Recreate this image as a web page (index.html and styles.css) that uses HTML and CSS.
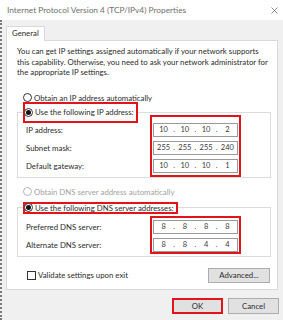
FILE: index.html
```html
<!DOCTYPE html>
<html lang="en">
<head>
  <meta charset="UTF-8">
  <meta name="viewport" content="width=device-width, initial-scale=1.0">
  <title>Internet Protocol Version 4 (TCP/IPv4) Properties</title>
  <link rel="stylesheet" href="styles.css">
</head>
<body>
  <div class="window">
    <div class="titlebar">
      <span class="title">Internet Protocol Version 4 (TCP/IPv4) Properties</span>
      <svg class="close" width="7" height="7" viewBox="0 0 7 7">
        <path d="M0.5 0.5L6.5 6.5M6.5 0.5L0.5 6.5" stroke="#6b6b6b" stroke-width="0.8" fill="none"/>
      </svg>
    </div>
    <div class="content">
      <div class="tabs">
        <div class="tab">General</div>
      </div>
      <div class="panel">
        <p class="intro">You can get IP settings assigned automatically if your network supports this capability. Otherwise, you need to ask your network administrator for the appropriate IP settings.</p>

        <div class="option option-ip">
          <span class="radio"></span>
          <span>Obtain an IP address automatically</span>
        </div>
        <fieldset class="group group-ip">
          <legend class="legend mark legend-ip">
            <span class="radio checked"></span>
            <span>Use the following IP address:</span>
          </legend>
          <div class="group-body">
            <div class="labels">
              <div class="row">IP address:</div>
              <div class="row">Subnet mask:</div>
              <div class="row">Default gateway:</div>
            </div>
            <div class="fields mark fields-ip">
              <div class="ipbox"><span>10</span><i>.</i><span>10</span><i>.</i><span>10</span><i>.</i><span>2</span></div>
              <div class="ipbox"><span>255</span><i>.</i><span>255</span><i>.</i><span>255</span><i>.</i><span>240</span></div>
              <div class="ipbox"><span>10</span><i>.</i><span>10</span><i>.</i><span>10</span><i>.</i><span>1</span></div>
            </div>
          </div>
        </fieldset>

        <div class="option option-dns disabled">
          <span class="radio"></span>
          <span>Obtain DNS server address automatically</span>
        </div>
        <fieldset class="group group-dns">
          <legend class="legend mark legend-dns">
            <span class="radio checked"></span>
            <span>Use the following DNS server addresses:</span>
          </legend>
          <div class="group-body">
            <div class="labels labels-dns">
              <div class="row">Preferred DNS server:</div>
              <div class="row">Alternate DNS server:</div>
            </div>
            <div class="fields mark fields-dns">
              <div class="ipbox"><span>8</span><i>.</i><span>8</span><i>.</i><span>8</span><i>.</i><span>8</span></div>
              <div class="ipbox"><span>8</span><i>.</i><span>8</span><i>.</i><span>4</span><i>.</i><span>4</span></div>
            </div>
          </div>
        </fieldset>

        <div class="validate">
          <label class="check">
            <span class="checkbox"></span>
            <span>Validate settings upon exit</span>
          </label>
          <button class="btn btn-advanced">Advanced...</button>
        </div>
      </div>
      <div class="actions">
        <button class="btn btn-ok">OK</button>
        <button class="btn">Cancel</button>
      </div>
    </div>
  </div>
</body>
</html>
```

FILE: styles.css
```css
* {
  margin: 0;
  padding: 0;
  box-sizing: border-box;
}
body {
  width: 283px;
  height: 320px;
  overflow: hidden;
  background: #f0f0f0;
  font-family: Lato, "Open Sans", sans-serif;
  font-size: 7.8px;
  color: #2b2b2b;
}
.window {
  width: 283px;
  height: 320px;
}
.titlebar {
  display: flex;
  justify-content: space-between;
  align-items: center;
  height: 20px;
  padding: 0 5px 0 7px;
  background: #fff;
}
.title {
  color: #707070;
  font-size: 8.3px;
}
.content {
  height: 300px;
  padding: 6px 4px 0 4px;
  border-left: 2px dotted #7a7a7a;
}
.tabs {
  display: flex;
}
.tab {
  position: relative;
  height: 15px;
  margin-bottom: -1px;
  padding: 0 5px;
  line-height: 13px;
  background: #fff;
  border: 1px solid #d9d9d9;
  border-bottom: none;
}
.panel {
  width: 272px;
  height: 250px;
  padding: 5px 6px 0 10px;
  background: #fff;
  border: 1px solid #d9d9d9;
}
.intro {
  line-height: 10.5px;
}

/* radios + checkbox */
.option {
  display: flex;
  align-items: center;
  height: 12px;
  padding-left: 6px;
}
.option-ip { margin-top: 14px; }
.option-dns { margin-top: 8px; }
.disabled { color: #a3a3a3; }
.radio {
  flex: none;
  display: inline-flex;
  align-items: center;
  justify-content: center;
  width: 9px;
  height: 9px;
  margin-right: 2px;
  border: 1px solid #333;
  border-radius: 50%;
  background: #fff;
}
.disabled .radio { border-color: #b5b5b5; }
.radio.checked::after {
  content: "";
  width: 5px;
  height: 5px;
  border-radius: 50%;
  background: #111;
}

/* group boxes */
.group {
  width: 254px;
  padding: 0 0 0 5px;
  border: 1px solid #dcdcdc;
}
.group-ip { margin-top: -2px; }
.group-dns { margin-top: 4px; padding-bottom: 2px; }
.mark {
  border: 2px solid #e3131b;
}
.legend {
  display: flex;
  align-items: center;
  padding-right: 2px;
}
.legend .radio { margin-left: -1px; }
.legend-ip {
  height: 21px;
}
.legend-dns {
  height: 12px;
}
.group-body {
  display: flex;
  align-items: flex-start;
}
.labels {
  display: flex;
  flex-direction: column;
  gap: 4px;
  width: 127px;
  padding-left: 3px;
}
.labels-dns { margin-top: 6px; }
.row {
  height: 14px;
  line-height: 14px;
}
.fields {
  display: flex;
  flex-direction: column;
  gap: 4px;
  width: 91px;
  padding: 0 1px;
}
.fields-ip {
  margin-top: -8px;
  padding-top: 6px;
  padding-bottom: 2px;
}
.fields-dns {
  margin-top: 2px;
  padding-top: 2px;
}
.ipbox {
  display: flex;
  align-items: center;
  height: 14px;
  padding: 0 1px;
  border: 1px solid #9a9a9a;
  color: #3a3a3a;
  font-size: 7.5px;
}
.ipbox span {
  flex: 1;
  text-align: center;
}
.ipbox i {
  width: 4px;
  font-style: normal;
  text-align: center;
}

/* bottom */
.validate {
  display: flex;
  justify-content: space-between;
  align-items: center;
  margin-top: 11px;
  padding-right: 1px;
}
.check {
  display: flex;
  align-items: center;
  padding-left: 10px;
}
.checkbox {
  width: 9px;
  height: 9px;
  margin-right: 2px;
  border: 1px solid #333;
  background: #fff;
}
.btn {
  height: 16px;
  width: 51px;
  font-family: inherit;
  font-size: 7.8px;
  color: #2b2b2b;
  background: #e1e1e1;
  border: 1px solid #adadad;
}
.btn-advanced {
  width: 62px;
  height: 15px;
}
.btn-ok {
  border: 2px solid #e3131b;
}
.actions {
  display: flex;
  justify-content: flex-end;
  gap: 5px;
  margin-top: 8px;
}
```
